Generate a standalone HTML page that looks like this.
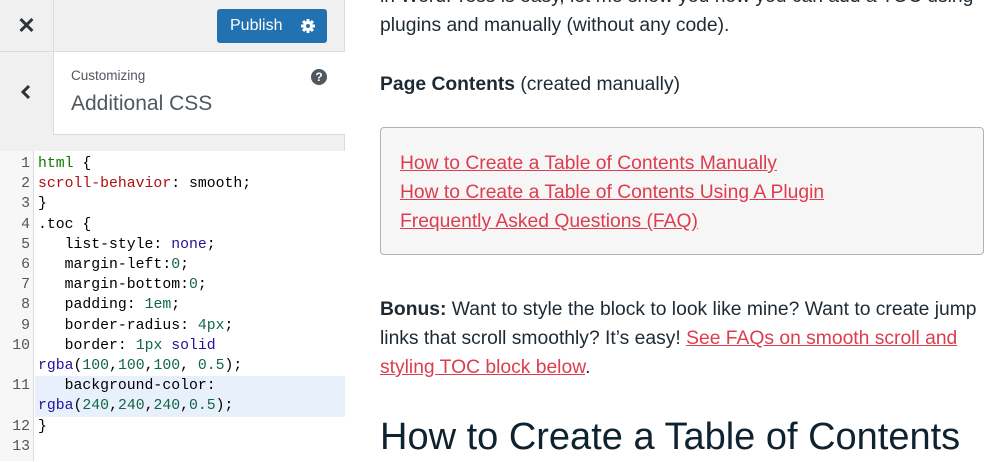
<!DOCTYPE html>
<html><head><meta charset="utf-8"><style>
*{margin:0;padding:0;box-sizing:border-box}
body{width:1008px;height:461px;overflow:hidden;background:#fff;font-family:"Liberation Sans",sans-serif;position:relative}
.left{position:absolute;left:0;top:0;width:345px;height:461px;background:#f0f0f1;border-right:1px solid #dcdcde}
.abs{position:absolute}
.code{font-family:"Liberation Mono",monospace;font-size:14.8px;line-height:20.2px;color:#000}
.ln{position:absolute;left:0;width:30px;text-align:right;color:#555}
.tx{position:absolute;left:38px;white-space:pre}
.g{color:#170}.r{color:#a11}.b{color:#219}.n{color:#164}
.p{position:absolute;left:380px;font-size:19.3px;color:#1e2a33;white-space:nowrap;line-height:29px}
a{color:#dc3d4f;text-decoration:underline}
</style></head><body>
<div class="left">
 <div class="abs" style="left:0;top:0;width:54px;height:51px;border-right:1px solid #dcdcde;font-size:22px;font-weight:bold;color:#2c3338;text-align:center;line-height:51px">✕</div>
 <div class="abs" style="left:217px;top:9px;width:110px;height:34px;background:#2271b1;border-radius:3px;color:#fff;font-size:16px;line-height:34px;padding-left:13px">Publish
  <svg style="position:absolute;left:84px;top:10px" width="14" height="14" viewBox="0 0 14 14"><g fill="#fff"><circle cx="7" cy="7" r="5"/><rect x="5.5" y="0" width="3" height="14" rx="0.5"/><rect x="0" y="5.5" width="14" height="3" rx="0.5"/><rect x="5.5" y="0" width="3" height="14" rx="0.5" transform="rotate(45 7 7)"/><rect x="5.5" y="0" width="3" height="14" rx="0.5" transform="rotate(-45 7 7)"/></g><circle cx="7" cy="7" r="2" fill="#2271b1"/></svg></div>
 <div class="abs" style="left:0;top:51px;width:345px;height:84px;background:#fff;border-top:1px solid #dcdcde;border-bottom:1px solid #dcdcde"></div>
 <div class="abs" style="left:0;top:52px;width:54px;height:83px;background:#f0f0f1;border-right:1px solid #dcdcde"></div>
 <svg class="abs" style="left:20px;top:84px" width="12" height="16" viewBox="0 0 12 16"><path d="M9 2 L3 8 L9 14" stroke="#2c3338" stroke-width="3" fill="none"/></svg>
 <div class="abs" style="left:71px;top:68px;font-size:13.5px;color:#50575e">Customizing</div>
 <div class="abs" style="left:71px;top:92px;font-size:21px;color:#50575e">Additional CSS</div>
 <div class="abs" style="left:311px;top:69px;width:16px;height:16px;border-radius:50%;background:#50575e;color:#fff;font-size:12px;font-weight:bold;text-align:center;line-height:16px">?</div>
 <div class="abs" style="left:0;top:151px;width:345px;height:310px;background:#fff"></div>
 <div class="abs" style="left:0;top:151px;width:34px;height:310px;background:#f7f7f7;border-right:1px solid #ddd"></div>
 <div class="abs" style="left:35px;top:376px;width:310px;height:41px;background:#e8f0fb"></div>
 <div class="abs code" style="left:0;top:154px;width:345px;height:300px">
  <div class="ln" style="top:0">1</div><div class="tx" style="top:0"><span class="g">html</span> {</div>
  <div class="ln" style="top:20.2px">2</div><div class="tx" style="top:20.2px"><span class="r">scroll-behavior</span>: smooth;</div>
  <div class="ln" style="top:40.4px">3</div><div class="tx" style="top:40.4px">}</div>
  <div class="ln" style="top:60.6px">4</div><div class="tx" style="top:60.6px">.toc {</div>
  <div class="ln" style="top:80.8px">5</div><div class="tx" style="top:80.8px">   list-style: <span class="b">none</span>;</div>
  <div class="ln" style="top:101px">6</div><div class="tx" style="top:101px">   margin-left:<span class="n">0</span>;</div>
  <div class="ln" style="top:121.2px">7</div><div class="tx" style="top:121.2px">   margin-bottom:<span class="n">0</span>;</div>
  <div class="ln" style="top:141.4px">8</div><div class="tx" style="top:141.4px">   padding: <span class="n">1em</span>;</div>
  <div class="ln" style="top:161.6px">9</div><div class="tx" style="top:161.6px">   border-radius: <span class="n">4px</span>;</div>
  <div class="ln" style="top:181.8px">10</div><div class="tx" style="top:181.8px">   border: <span class="n">1px</span> <span class="b">solid</span></div>
  <div class="tx" style="top:202px"><span class="b">rgba</span>(<span class="n">100</span>,<span class="n">100</span>,<span class="n">100</span>, <span class="n">0.5</span>);</div>
  <div class="ln" style="top:222.2px">11</div><div class="tx" style="top:222.2px">   background-color:</div>
  <div class="tx" style="top:242.4px"><span class="b">rgba</span>(<span class="n">240</span>,<span class="n">240</span>,<span class="n">240</span>,<span class="n">0.5</span>);</div>
  <div class="ln" style="top:262.6px">12</div><div class="tx" style="top:262.6px">}</div>
  <div class="ln" style="top:282.8px">13</div>
 </div>
</div>
<div class="p" style="top:-18px">in WordPress is easy, let me show you how you can add a TOC using</div>
<div class="p" style="top:11px">plugins and manually (without any code).</div>
<div class="p" style="top:70px"><b>Page Contents</b> (created manually)</div>
<div class="abs" style="left:380px;top:127px;width:604px;height:128px;background:#f6f6f6;border:1px solid #b3b3b3;border-radius:4px"></div>
<div class="p" style="left:400px;top:149px"><a>How to Create a Table of Contents Manually</a></div>
<div class="p" style="left:400px;top:178px"><a>How to Create a Table of Contents Using A Plugin</a></div>
<div class="p" style="left:400px;top:207px"><a>Frequently Asked Questions (FAQ)</a></div>
<div class="p" style="top:295px"><b>Bonus:</b> Want to style the block to look like mine? Want to create jump</div>
<div class="p" style="top:324px">links that scroll smoothly? It’s easy! <a>See FAQs on smooth scroll and</a></div>
<div class="p" style="top:353px"><a>styling TOC block below</a>.</div>
<div class="p" style="top:412px;font-size:38px;line-height:50px;color:#0f2230">How to Create a Table of Contents</div>
</body></html>
